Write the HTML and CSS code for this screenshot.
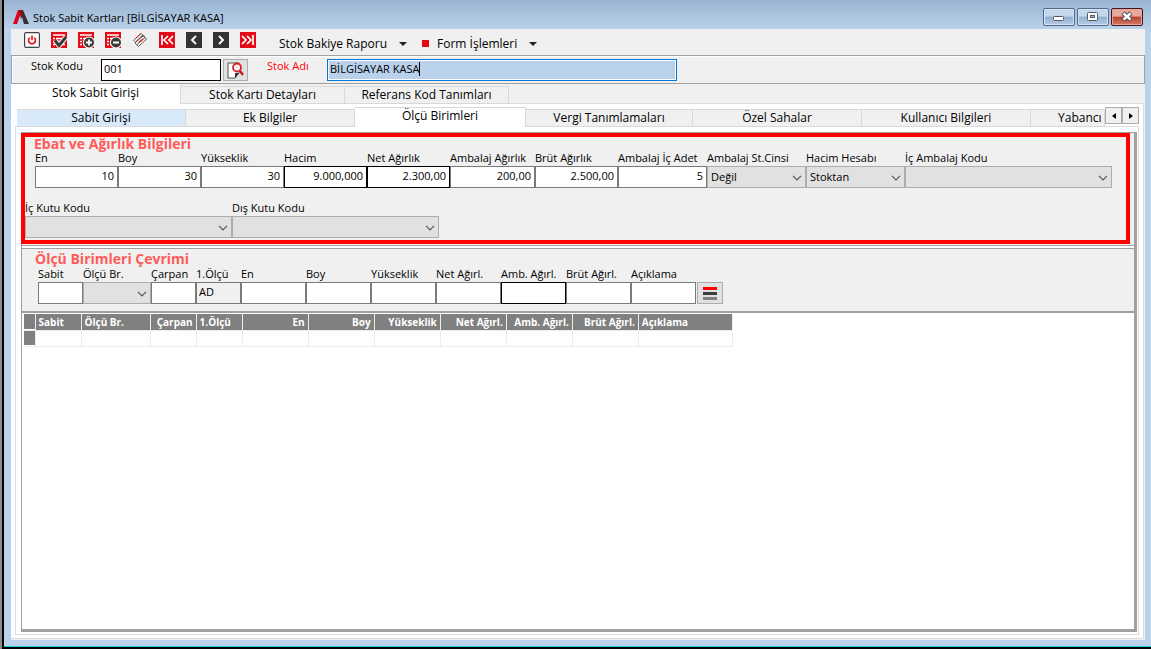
FILE: index.html
```
<!DOCTYPE html>
<html lang="tr">
<head>
<meta charset="utf-8">
<title>Stok Sabit Kartları</title>
<link rel="stylesheet" href="styles.css">
</head>
<body>
<svg class="defs" aria-hidden="true">
  <symbol id="chev" viewBox="0 0 10 6"><path d="M1 .8 5 4.8 9 .8" fill="none" stroke="#555" stroke-width="1.2"/></symbol>
  <symbol id="drop" viewBox="0 0 8 4"><path d="M0 0h8L4 4z" fill="#222"/></symbol>
  <symbol id="form" viewBox="0 0 16 16"><path d="M0 0h16v16H0z" fill="#e30b17"/><path d="M2 3h12M5 6.500h9M5 9.500h9M5 12.500h9M2 6.500h2M2 9.500h2M2 12.500h2" stroke="#fff" stroke-width="1.300"/></symbol>
</svg>
<div class="window">
  <header class="titlebar">
    <svg class="logo" viewBox="0 0 16 14"><path d="M0 14 5 0h4L4 14z" fill="#e2001a"/><path d="M7 0h3l6 14h-5z" fill="#333"/><path d="M6 0h3l1 5-2 4z" fill="#8d1019"/></svg>
    <span class="caption">Stok Sabit Kartları [BİLGİSAYAR KASA]</span>
    <button class="wbtn" aria-label="Simge durumuna küçült"><svg width="30" height="16"><rect x="9.500" y="7.500" width="10" height="4" rx="1" fill="#fff" stroke="#555b66"/></svg></button>
    <button class="wbtn" aria-label="Ekranı kapla"><svg width="30" height="16"><rect x="9.500" y="3.500" width="10" height="8" rx="1" fill="#fff" stroke="#555b66"/><rect x="12.500" y="6.500" width="4" height="2" fill="#9db7d3" stroke="#555b66"/></svg></button>
    <button class="wbtn close" aria-label="Kapat"><svg width="30" height="16"><path d="m11 4 8 7m0-7-8 7" stroke="#56505a" stroke-width="4.500"/><path d="m11.500 4.500 7 6m0-6-7 6" stroke="#fff" stroke-width="2.400"/></svg></button>
  </header>
  <main class="client">
    <nav class="toolbar">
      <button class="tool" aria-label="Çıkış"><svg viewBox="0 0 16 16"><rect x=".6" y=".6" width="14.800" height="14.800" rx="1.500" fill="#fff" stroke="#444" stroke-width="1.200"/><path d="M5.800 5.500a3.500 3.500 0 1 0 4.400 0M8 3.500V8" fill="none" stroke="#e30b17" stroke-width="1.600"/></svg></button>
      <button class="tool" aria-label="Kaydet"><svg viewBox="0 0 16 16"><use href="#form" width="16" height="16"/><path d="m4 8.500 4 5 7-8.500" fill="none" stroke="#fff" stroke-width="5"/><path d="m4 8.500 4 5 7-8.500" fill="none" stroke="#3c3c3b" stroke-width="3"/></svg></button>
      <button class="tool" aria-label="Yeni"><svg viewBox="0 0 16 16"><use href="#form" width="16" height="16"/><circle cx="11" cy="10.500" r="6" fill="#fff"/><circle cx="11" cy="10.500" r="5" fill="#3c3c3b"/><path d="M8 10.500h6M11 7.500v6" stroke="#fff" stroke-width="1.800"/></svg></button>
      <button class="tool" aria-label="Sil"><svg viewBox="0 0 16 16"><use href="#form" width="16" height="16"/><circle cx="11" cy="10.500" r="6" fill="#fff"/><circle cx="11" cy="10.500" r="5" fill="#3c3c3b"/><path d="M8 10.500h6" stroke="#fff" stroke-width="2"/></svg></button>
      <button class="tool" aria-label="Temizle"><svg viewBox="0 0 16 16"><path d="M1.500 8.500 9 1.500l4 3-7 7z" fill="#f7f7f7" stroke="#777"/><path d="m3 7 6-5.500" stroke="#e30b17"/><path d="m3 11 8-7 3.500 3L6.500 14.500z" fill="#fff" stroke="#555"/><path d="m5 12.500 8-7M4 9.500l7-6.500" stroke="#555"/><path d="m7 10.500 4-3.500" stroke="#e30b17" stroke-width="1.400"/></svg></button>
      <button class="tool" aria-label="İlk kayıt"><svg viewBox="0 0 16 16"><path d="M0 0h16v16H0z" fill="#e30b17"/><path d="M3 3v10M9 4 5 8l4 4m5-8-4 4 4 4" fill="none" stroke="#fff" stroke-width="1.700"/></svg></button>
      <button class="tool" aria-label="Önceki kayıt"><svg viewBox="0 0 16 16"><path d="M0 0h16v16H0z" fill="#333"/><path d="M10 4 6 8l4 4" fill="none" stroke="#fff" stroke-width="1.900"/></svg></button>
      <button class="tool" aria-label="Sonraki kayıt"><svg viewBox="0 0 16 16"><path d="M0 0h16v16H0z" fill="#333"/><path d="m6 4 4 4-4 4" fill="none" stroke="#fff" stroke-width="1.900"/></svg></button>
      <button class="tool" aria-label="Son kayıt"><svg viewBox="0 0 16 16"><path d="M0 0h16v16H0z" fill="#e30b17"/><path d="M13 3v10M7 4l4 4-4 4M2 4l4 4-4 4" fill="none" stroke="#fff" stroke-width="1.700"/></svg></button>
      <button class="menu">Stok Bakiye Raporu <svg class="drop"><use href="#drop"/></svg></button>
      <button class="menu second"><i class="dot"></i>Form İşlemleri <svg class="drop"><use href="#drop"/></svg></button>
    </nav>
    <section class="keybar">
      <label for="kod">Stok Kodu</label>
      <input id="kod" class="txt dark code" value="001">
      <button class="search" aria-label="Stok ara"><svg viewBox="0 0 17 17"><path d="M1 1h11v10l-4 5H1z" fill="#fff" stroke="#555"/><path d="M8 16v-5h4z" fill="#333"/><circle cx="10" cy="5.500" r="4" fill="#f6eded" stroke="#d9232e" stroke-width="1.800"/><path d="m13 9 3 4" stroke="#c51521" stroke-width="2.400"/></svg></button>
      <label for="adi" class="name-label">Stok Adı</label>
      <span class="name"><input id="adi" class="txt" value="BİLGİSAYAR KASA"><i class="caret"></i></span>
    </section>
    <div class="tabs" role="tablist">
      <button role="tab" class="tab on">Stok Sabit Girişi</button>
      <button role="tab" class="tab">Stok Kartı Detayları</button>
      <button role="tab" class="tab">Referans Kod Tanımları</button>
    </div>
    <div class="page">
      <div class="subtabs" role="tablist">
        <button role="tab" class="tab hot">Sabit Girişi</button>
        <button role="tab" class="tab">Ek Bilgiler</button>
        <button role="tab" class="tab on">Ölçü Birimleri</button>
        <button role="tab" class="tab after">Vergi Tanımlamaları</button>
        <button role="tab" class="tab">Özel Sahalar</button>
        <button role="tab" class="tab">Kullanıcı Bilgileri</button>
        <button role="tab" class="tab last">Yabancı I</button>
        <span class="scroller"><button aria-label="Sola kaydır"><svg width="4" height="6"><path d="M4 0v6L0 3z"/></svg></button><button aria-label="Sağa kaydır"><svg width="4" height="6"><path d="M0 0v6l4-3z"/></svg></button></span>
      </div>
      <div class="subpage">
        <div class="sheet">
          <section class="dims">
            <h2>Ebat ve Ağırlık Bilgileri</h2>
            <div class="fields first">
              <label class="w83">En<input class="txt num" value="10"></label>
              <label class="w83">Boy<input class="txt num" value="30"></label>
              <label class="w83">Yükseklik<input class="txt num" value="30"></label>
              <label class="w83">Hacim<input class="txt num dark" value="9.000,000"></label>
              <label class="w83">Net Ağırlık<input class="txt num dark" value="2.300,00"></label>
              <label class="w85">Ambalaj Ağırlık<input class="txt num" value="200,00"></label>
              <label class="w83">Brüt Ağırlık<input class="txt num" value="2.500,00"></label>
              <label class="w89">Ambalaj İç Adet<input class="txt num" value="5"></label>
              <label class="w99">Ambalaj St.Cinsi<span class="combo"><select><option>Değil</option></select><svg><use href="#chev"/></svg></span></label>
              <label class="w99">Hacim Hesabı<span class="combo"><select><option>Stoktan</option></select><svg><use href="#chev"/></svg></span></label>
              <label class="w207">İç Ambalaj Kodu<span class="combo"><select><option></option></select><svg><use href="#chev"/></svg></span></label>
            </div>
            <div class="fields boxes">
              <label class="w207">İç Kutu Kodu<span class="combo"><select><option></option></select><svg><use href="#chev"/></svg></span></label>
              <label class="w207">Dış Kutu Kodu<span class="combo"><select><option></option></select><svg><use href="#chev"/></svg></span></label>
            </div>
          </section>
          <section class="convert">
            <h2>Ölçü Birimleri Çevrimi</h2>
            <div class="fields">
              <label class="w45">Sabit<input class="txt"></label>
              <label class="w68">Ölçü Br.<span class="combo"><select><option></option></select><svg><use href="#chev"/></svg></span></label>
              <label class="w45">Çarpan<input class="txt"></label>
              <label class="w45">1.Ölçü<input class="txt ro" value="AD" readonly></label>
              <label class="w65">En<input class="txt"></label>
              <label class="w65">Boy<input class="txt"></label>
              <label class="w65">Yükseklik<input class="txt"></label>
              <label class="w65">Net Ağırl.<input class="txt"></label>
              <label class="w65">Amb. Ağırl.<input class="txt dark"></label>
              <label class="w65">Brüt Ağırl.<input class="txt"></label>
              <label class="w65">Açıklama<input class="txt"></label>
              <button class="listbtn" aria-label="Liste"><svg width="14" height="13"><path d="M0 0h14v3H0z" fill="#f00"/><path d="M0 5h14v3H0z" fill="#3c3c3c"/><path d="M0 10h14v3H0z" fill="#808080"/></svg></button>
            </div>
          </section>
          <section class="grid">
            <table>
              <colgroup><col class="c12"><col class="c46"><col class="c69"><col class="c46"><col class="c46"><col class="c66"><col class="c66"><col class="c66"><col class="c66"><col class="c66"><col class="c66"><col class="c94"></colgroup>
              <thead><tr><th class="mark"></th><th>Sabit</th><th>Ölçü Br.</th><th class="r">Çarpan</th><th>1.Ölçü</th><th class="r">En</th><th class="r">Boy</th><th class="r">Yükseklik</th><th class="r">Net Ağırl.</th><th class="r">Amb. Ağırl.</th><th class="r">Brüt Ağırl.</th><th>Açıklama</th></tr></thead>
              <tbody><tr><td class="mark"></td><td></td><td></td><td></td><td></td><td></td><td></td><td></td><td></td><td></td><td></td><td></td></tr></tbody>
            </table>
          </section>
        </div>
      </div>
    </div>
  </main>
</div>
</body>
</html>
```
FILE: styles.css
```
* { box-sizing: border-box; }
body { margin: 0; font: 11px/14px "Open Sans", "Noto Sans", sans-serif; color: #000; }
button, input, select { font: inherit; color: inherit; margin: 0; padding: 0; border-radius: 0; }
button { display: flex; align-items: center; justify-content: center; border: 0; background: none; white-space: nowrap; }
svg { display: block; flex: none; }
.defs { position: absolute; width: 0; height: 0; }

.window {
  min-height: 100vh;
  display: flex;
  flex-direction: column;
  padding: 0 6px 9px 11px;
  background:
    linear-gradient(90deg, #8a8a8a 2px, #000 2px) 0 0 / 4px 100% no-repeat,
    linear-gradient(#000, #000) 0 100% / 100% 2px no-repeat,
    linear-gradient(#22cbe0, #22cbe0) 0 calc(100% - 2px) / 100% 1px no-repeat,
    linear-gradient(#99b4d1, #b9d1ea) 0 0 / 100% 29px no-repeat,
    #b9d1ea;
}
.titlebar { display: flex; height: 29px; padding: 8px 2px 0 2px; gap: 2px; }
.logo { width: 16px; height: 14px; margin-top: 2px; }
.caption { flex: 1; padding-left: 2px; line-height: 19px; }
.wbtn { width: 32px; height: 18px; border: 1px solid #516a86; border-radius: 2px; background: linear-gradient(#c3d6ea 45%, #91afcf 50%, #b5cde6); box-shadow: inset 0 0 0 1px #d4e3f2; }
.close { border-color: #431422; background: linear-gradient(#e8a99d 45%, #b8402c 50%, #d27c67); box-shadow: inset 0 0 0 1px #e6a49a; }

.client { flex: 1; display: flex; flex-direction: column; background: #f0f0f0; }
.toolbar { display: flex; height: 26px; padding: 3px 13px 0; gap: 11px; }
.tool { width: 16px; height: 16px; }
.tool svg { width: 16px; height: 16px; }
.menu { height: 23px; margin-left: 12px; font-size: 12px; }
.second { margin-left: 4px; }
.drop { width: 8px; height: 4px; margin-left: 12px; }
.dot { width: 7px; height: 7px; margin-right: 8px; background: #e30613; }

.keybar { display: flex; align-items: flex-start; height: 29px; padding: 3px 0 0 19px; border: 1px solid #a0a0a0; box-shadow: inset 1px 1px #fff; }
.keybar label { width: 70px; line-height: 14px; }
.keybar .name-label { width: 60px; margin-left: 19px; color: #f00; }
.txt { display: block; width: 100%; height: 22px; padding: 0 3px 3px 2px; border: 1px solid #7a7a7a; background: #fff; outline: 0; }
.dark { border-color: #000; }
.code { width: 120px; }
.search { width: 25px; height: 22px; margin-left: 2px; border: 1px solid #adadad; background: #e1e1e1; }
.search svg { width: 17px; height: 17px; }
.name { position: relative; width: 350px; }
.name .txt { border-color: #0078d7; background: #b9d1ea; box-shadow: inset 0 0 0 1px #fff; }
.caret { position: absolute; left: 92px; top: 3px; width: 1px; height: 14px; background: #000; }

.tabs { display: flex; align-items: flex-end; height: 20px; position: relative; z-index: 1; }
.tab { height: 18px; border: 1px solid #d9d9d9; border-width: 1px 1px 1px 0; background: #f0f0f0; font-size: 12px; }
.tabs .tab { width: 164px; }
.tabs .on { width: 170px; height: 20px; padding-bottom: 2px; border: 0; background: #fff; border-right: 1px solid #d9d9d9; }
.page { flex: 1; display: flex; flex-direction: column; margin: -1px 1px 1px 0; padding: 3px 4px; border: 1px solid #dcdcdc; border-left: 0; background: #fff; }
.subtabs { display: flex; align-items: flex-end; height: 20px; margin-bottom: -1px; padding-left: 2px; position: relative; }
.subtabs .tab { flex: none; width: 169px; }
.subtabs .on { width: 171px; height: 20px; padding-bottom: 3px; border-bottom: 0; background: #fff; }
.subtabs .hot { background: #d8eaf9; }
.subtabs .after { width: 167px; }
.subtabs .last { flex: 1; min-width: 0; justify-content: flex-start; padding-left: 27px; }
.scroller { display: flex; align-self: flex-start; background: #fff; }
.scroller button { width: 17px; height: 17px; border: 1px solid #adadad; background: #f0f0f0; }
.subpage { flex: 1; display: flex; padding: 5px 1px 2px 5px; border: 1px solid #dcdcdc; }
.sheet { flex: 1; min-width: 0; display: flex; flex-direction: column; border: 1px solid #a0a0a0; border-width: 1px 3px 3px 1px; background: #f0f0f0; }

h2 { margin: 0; font: bold 14px/14px "Open Sans", sans-serif; color: #ff5b5b; }
.fields { display: flex; }
.fields label { display: block; flex: none; line-height: 16px; white-space: nowrap; }
.dims { height: 111px; margin: 0 4px 0 -1px; border: 4px solid #f00; }
.dims h2 { padding-left: 9px; line-height: 13px; }
.first { padding-left: 10px; }
.boxes { padding-top: 12px; }
.num { text-align: right; }
.combo { display: block; position: relative; }
.combo select { display: block; width: 100%; height: 22px; padding-left: 3px; border: 1px solid #adadad; background: #e1e1e1; appearance: none; }
.combo svg { position: absolute; right: 4px; top: 9px; width: 10px; height: 6px; pointer-events: none; }
.w45 { width: 45px; } .w65 { width: 65px; } .w68 { width: 68px; } .w83 { width: 83px; }
.w85 { width: 85px; } .w89 { width: 89px; } .w99 { width: 99px; } .w207 { width: 207px; }

.convert { height: 63px; margin-top: 4px; padding-top: 3px; border-top: 1px solid #a0a0a0; box-shadow: 0 -2px #fff, 0 -3px #a0a0a0; }
.convert h2 { padding-left: 13px; }
.convert .fields { padding-left: 16px; }
.ro { background: #f0f0f0; }
.listbtn { align-self: flex-end; width: 26px; height: 22px; margin-left: 1px; border: 1px solid #adadad; background: #e1e1e1; }

.grid { flex: 1; padding: 1px; border-top: 2px solid #a0a0a0; background: #fff; }
table { width: 710px; table-layout: fixed; border-collapse: collapse; }
th, td { height: 16px; padding: 0 3px; border: 1px solid #ececec; border-width: 0 1px 1px 0; }
th { font-weight: bold; font-size: 10px; line-height: 14px; text-align: left; color: #fff; background: #808080; white-space: nowrap; }
.r { text-align: right; }
.mark { background: #808080; box-shadow: inset 1px -1px #fff; }
.c12 { width: 12px; } .c46 { width: 46px; } .c69 { width: 69px; } .c66 { width: 66px; } .c94 { width: 94px; }
```
